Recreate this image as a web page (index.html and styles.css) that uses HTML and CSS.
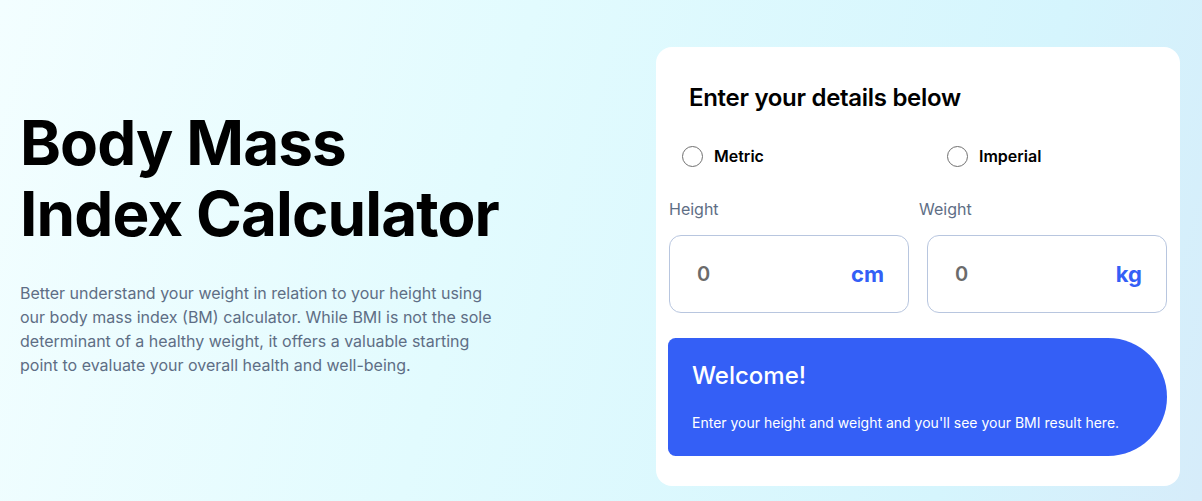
FILE: index.html
```html
<!DOCTYPE html>
<html lang="en">
<head>
<meta charset="utf-8">
<title>BMI Calculator</title>
<link rel="stylesheet" href="styles.css">
</head>
<body>
<main class="page">
  <section class="intro">
    <h1 class="title">Body Mass<br>Index Calculator</h1>
    <p class="lead">Better understand your weight in relation to your height using our body mass index (BM) calculator. While BMI is not the sole determinant of a healthy weight, it offers a valuable starting point to evaluate your overall health and well-being.</p>
  </section>
  <section class="card">
    <h2 class="card-title">Enter your details below</h2>
    <div class="units">
      <label class="radio"><span class="dot"></span><span>Metric</span></label>
      <label class="radio"><span class="dot"></span><span>Imperial</span></label>
    </div>
    <div class="fields">
      <div class="field">
        <span class="field-label">Height</span>
        <div class="box"><span class="value">0</span><span class="unit">cm</span></div>
      </div>
      <div class="field">
        <span class="field-label">Weight</span>
        <div class="box"><span class="value">0</span><span class="unit">kg</span></div>
      </div>
    </div>
    <div class="result">
      <h3 class="result-title">Welcome!</h3>
      <p class="result-text">Enter your height and weight and you'll see your BMI result here.</p>
    </div>
  </section>
</main>
</body>
</html>
```
FILE: styles.css
```css
* { box-sizing: border-box; }
html, body { margin: 0; height: 100%; }
body {
  font-family: Inter, "Noto Sans", sans-serif;
  background: linear-gradient(105deg, #f3feff 0%, #e2fbfe 40%, #d5f5fd 80%, #d6ecfa 100%);
  color: #000;
  overflow: hidden;
}
.page {
  display: flex;
  padding: 47px 22px 0 20px;
  height: 501px;
}
.intro {
  flex: 1;
  padding-top: 60px;
}
.title {
  margin: 0;
  font-size: 62px;
  line-height: 71px;
  font-weight: 700;
  letter-spacing: -0.9px;
  color: #000;
}
.lead {
  margin: 32px 0 0;
  width: 480px;
  font-size: 16px;
  line-height: 24px;
  color: #5e6e85;
}
.card {
  width: 524px;
  height: 439px;
  background: #fff;
  border-radius: 16px;
  padding: 36px 13px 0 13px;
}
.card-title {
  margin: 0 0 0 20px;
  font-size: 24px;
  line-height: 30px;
  font-weight: 600;
  letter-spacing: -0.3px;
}
.units {
  display: grid;
  grid-template-columns: 265px 1fr;
  padding-left: 13px;
  margin-top: 33px;
}
.radio {
  display: flex;
  align-items: center;
  gap: 11px;
  font-size: 16px;
  font-weight: 600;
  height: 20px;
}
.dot {
  width: 21px;
  height: 21px;
  border: 1px solid #707070;
  border-radius: 50%;
  background: #fff;
}
.fields {
  display: flex;
  gap: 18px;
  margin-top: 33px;
}
.field {
  flex: 1;
  display: flex;
  flex-direction: column;
}
.field-label {
  font-size: 16px;
  line-height: 20px;
  color: #5e6e85;
}
.field:last-child .field-label { margin-left: -8px; }
.box {
  margin-top: 16px;
  height: 78px;
  border: 1px solid #b8c6df;
  border-radius: 12px;
  display: flex;
  align-items: center;
  justify-content: space-between;
  padding: 0 24px 0 27px;
}
.value {
  font-size: 20px;
  font-weight: 600;
  color: #6b6b6b;
}
.unit {
  font-size: 22px;
  font-weight: 700;
  color: #345ff6;
}
.result {
  margin-top: 25px;
  margin-left: -1px;
  height: 118px;
  background: #345ff6;
  border-radius: 8px 62px 62px 8px;
  color: #fff;
  padding: 24px 24px 0 24px;
}
.result-title {
  margin: 0;
  font-size: 24px;
  line-height: 28px;
  font-weight: 500;
}
.result-text {
  margin: 23px 0 0;
  font-size: 14px;
  line-height: 20px;
}
```
